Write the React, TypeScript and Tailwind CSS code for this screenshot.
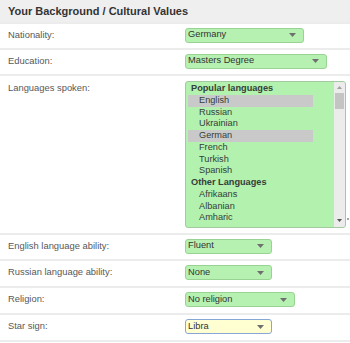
import React from "react";

const font = { fontFamily: '"Liberation Sans", Arial, sans-serif' };

const Arrow = () => (
  <svg width="7" height="4" viewBox="0 0 7 4" className="shrink-0">
    <path d="M0 0h7L3.5 4z" fill="#6f6f6f" />
  </svg>
);

const Select = ({ value, width, tone = "green" }: { value: string; width: string; tone?: "green" | "yellow" }) => (
  <div
    className={`flex h-[15px] items-center justify-between rounded-[3px] border pl-[2px] pr-[7px] text-[9.3px] leading-none text-[#333] ${width} ${
      tone === "green" ? "border-[#98d394] bg-[#b6f1b1]" : "border-[#86a6d6] bg-[#ffffd2]"
    }`}
  >
    <span>{value}</span>
    <Arrow />
  </div>
);

const Row = ({ label, children, h = "h-[26px]" }: { label: string; children: React.ReactNode; h?: string }) => (
  <div className={`flex ${h} items-center border-t-2 border-[#ececec] pb-[2px]`}>
    <div className="w-[185px] shrink-0 pl-2 text-[9.4px] text-[#585858]">{label}</div>
    {children}
  </div>
);

const popular = ["English", "Russian", "Ukrainian", "German", "French", "Turkish", "Spanish"];
const other = ["Afrikaans", "Albanian", "Amharic"];
const selected = ["English", "German"];

const Option = ({ name }: { name: string }) => (
  <div className={`ml-[2px] w-[125px] pl-[11px] ${selected.includes(name) ? "bg-[#c9c9c9]" : ""}`}>{name}</div>
);

export default function App() {
  return (
    <div className="w-[350px] bg-white" style={font}>
      <div className="flex h-[22px] items-center bg-[#efefef] pl-2 text-[11px] font-bold text-[#333]">
        Your Background / Cultural Values
      </div>
      <Row label="Nationality:">
        <Select value="Germany" width="w-[119px]" />
      </Row>
      <Row label="Education:">
        <Select value="Masters Degree" width="w-[142px]" />
      </Row>
      <div className="flex h-[159px] items-start border-t-2 border-[#ececec] pt-[5px]">
        <div className="mt-[1px] w-[185px] shrink-0 pl-2 text-[9.4px] leading-[12px] text-[#585858]">Languages spoken:</div>
        <div className="flex h-[147px] w-[161px] overflow-hidden rounded-[3px] border border-[#a3c9a0] bg-[#b3f1ae] text-[9.2px] leading-[11.75px] text-[#34403a]">
          <div className="flex-1 pt-[1px]">
            <div className="pl-[5px] font-bold">Popular languages</div>
            {popular.map((n) => (
              <Option key={n} name={n} />
            ))}
            <div className="pl-[5px] font-bold">Other Languages</div>
            {other.map((n) => (
              <Option key={n} name={n} />
            ))}
          </div>
          <div className="flex w-[11px] flex-col bg-[#ececec]">
            <div className="flex h-[11px] items-center justify-center">
              <svg width="5" height="3" viewBox="0 0 5 3">
                <path d="M0 3h5L2.5 0z" fill="#a0a0a0" />
              </svg>
            </div>
            <div className="mx-[1px] h-[16px] bg-[#c4c4c4]" />
            <div className="flex-1" />
            <div className="flex h-[13px] items-center justify-center">
              <svg width="5" height="3" viewBox="0 0 5 3">
                <path d="M0 0h5L2.5 3z" fill="#555" />
              </svg>
            </div>
          </div>
        </div>
        <div className="mt-[137px] ml-[1px] h-[2px] w-[2px] rounded-full bg-[#888]" />
      </div>
      <Row label="English language ability:">
        <Select value="Fluent" width="w-[87px]" />
      </Row>
      <Row label="Russian language ability:" h="h-[27px]">
        <Select value="None" width="w-[87px]" />
      </Row>
      <Row label="Religion:" h="h-[27px]">
        <Select value="No religion" width="w-[110px]" />
      </Row>
      <Row label="Star sign:" h="h-[27px]">
        <Select value="Libra" width="w-[87px]" tone="yellow" />
      </Row>
      <div className="h-[2px] bg-[#ececec]" />
    </div>
  );
}
